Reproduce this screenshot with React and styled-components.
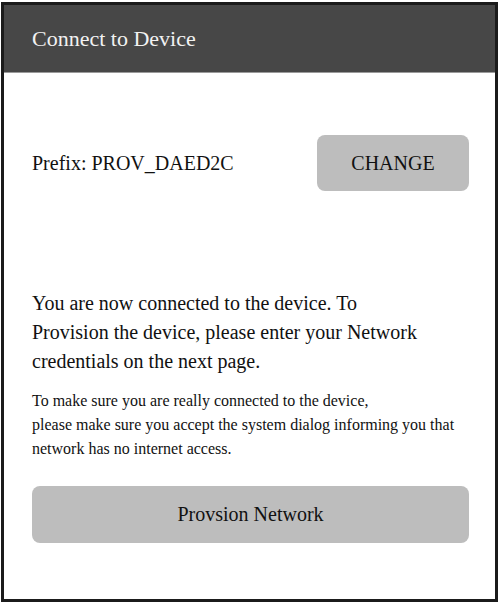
import React from 'react'
import styled, { createGlobalStyle } from 'styled-components'

const GlobalStyle = createGlobalStyle`
    body {
        margin: 0;
        background: #ffffff;
        font-family: "Liberation Serif", "Times New Roman", serif;
    }
`

const App = () => {
    return (
        <>
            <GlobalStyle />
            <Frame>
                <Header>
                    <HeaderTitle>Connect to Device</HeaderTitle>
                </Header>
                <Content>
                    <PrefixRow>
                        <PrefixText>Prefix: PROV_DAED2C</PrefixText>
                        <ChangeButton>CHANGE</ChangeButton>
                    </PrefixRow>
                    <Lead>
                        You are now connected to the device. To Provision the device, please enter your Network
                        credentials on the next page.
                    </Lead>
                    <Note>
                        To make sure you are really connected to the device,
                        <br />
                        please make sure you accept the system dialog informing you that network has no internet access.
                    </Note>
                    <ProvisionButton>Provsion Network</ProvisionButton>
                </Content>
            </Frame>
        </>
    )
}

const Frame = styled.div`
    box-sizing: border-box;
    width: 497px;
    height: 600px;
    margin: 2px 0 0 1px;
    border: 3px solid #1b1b1b;
    display: flex;
    flex-direction: column;
    background: #ffffff;
`

const Header = styled.header`
    height: 67px;
    background: #474747;
    border-bottom: 1px solid #9a9a9a;
    display: flex;
    align-items: center;
    padding: 0 28px;
`

const HeaderTitle = styled.h1`
    margin: 0;
    color: #f2f2f2;
    font-weight: 400;
    font-size: 22px;
`

const Content = styled.main`
    display: flex;
    flex-direction: column;
    padding: 62px 26px 0 28px;
`

const PrefixRow = styled.div`
    display: flex;
    align-items: center;
    justify-content: space-between;
`

const PrefixText = styled.span`
    font-size: 20px;
    color: #111;
`

const Button = styled.button`
    font-family: inherit;
    background: #bdbdbd;
    border: none;
    border-radius: 8px;
    color: #111;
    font-size: 20px;
    cursor: pointer;
`

const ChangeButton = styled(Button)`
    width: 152px;
    height: 56px;
`

const Lead = styled.p`
    margin: 98px 0 0;
    max-width: 395px;
    font-size: 20px;
    line-height: 29px;
    color: #111;
`

const Note = styled.p`
    margin: 13px 0 0;
    font-size: 16px;
    line-height: 24px;
    color: #111;
`

const ProvisionButton = styled(Button)`
    margin-top: 25px;
    width: 100%;
    height: 57px;
`

export default App
